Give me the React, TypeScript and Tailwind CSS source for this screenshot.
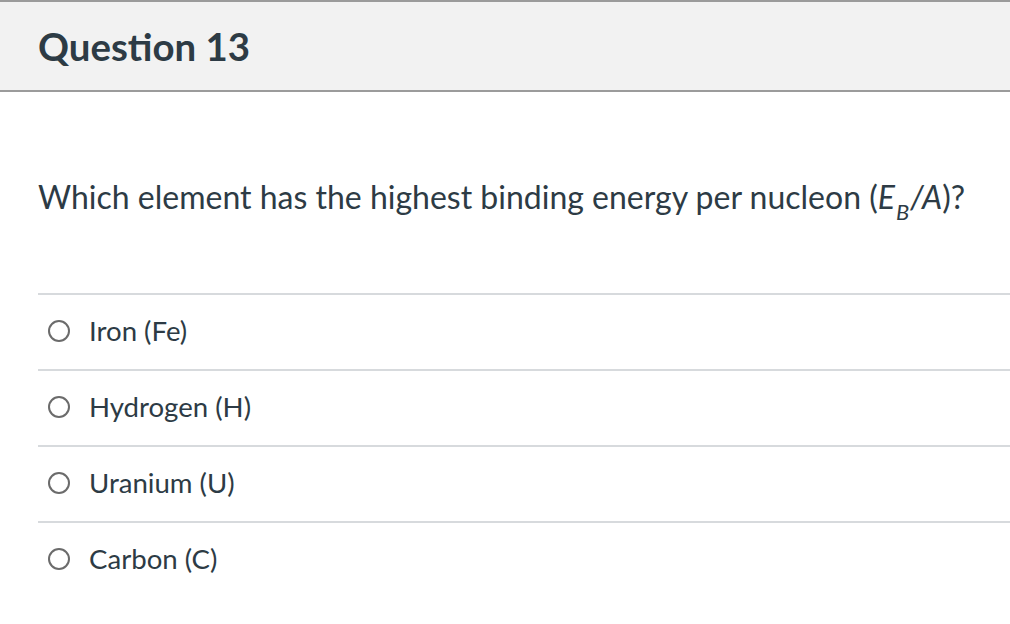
import React from "react";

const options = ["Iron (Fe)", "Hydrogen (H)", "Uranium (U)", "Carbon (C)"];

export default function App() {
  return (
    <div className="w-[1010px] h-[624px] bg-white overflow-hidden" style={{ fontFamily: "Lato, 'Noto Sans', sans-serif" }}>
      <div className="h-[92px] bg-[#f2f2f2] border-t-2 border-b-2 border-[#9b9b9b] flex items-center px-[38px]">
        <h2 className="text-[38.4px] font-bold text-[#2d3b45] leading-none">Question 13</h2>
      </div>
      <div className="pl-[38px]">
        <div className="pt-[85px] pb-[76px] text-[32px] text-[#2d3b45] leading-[40px]">
          Which element has the highest binding energy per nucleon (<i>E</i><sub className="text-[22px] align-[-5px] leading-none ml-[1px] mr-[1px]"><i>B</i></sub><i>/A</i>)?
        </div>
        <div>
          {options.map((o) => (
            <div key={o} className="border-t-2 border-[#d7dadd] h-[76px] flex items-center pb-[3px]">
              <span className="ml-[10px] w-[22px] h-[22px] rounded-full border-2 border-[#6b6b6b] bg-white" />
              <span className="ml-[19px] text-[27.6px] text-[#2d3b45]">{o}</span>
            </div>
          ))}
        </div>
      </div>
    </div>
  );
}
